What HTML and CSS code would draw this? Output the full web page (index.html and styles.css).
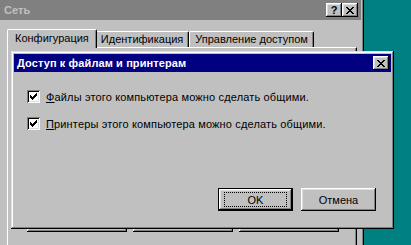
FILE: index.html
```html
<!DOCTYPE html>
<html lang="ru">
<head>
    <meta charset="UTF-8">
    <title>Сеть</title>
    <link rel="stylesheet" href="styles.css">
</head>
<body>
    <div id="desktop">
        <div class="window net-window">
            <div class="title-bar inactive">
                <span class="title-text">Сеть</span>
                <div class="title-buttons">
                    <div class="title-btn help-btn">?</div>
                    <div class="title-btn">
                        <svg width="8" height="7" viewBox="0 0 8 7"><path d="M0 0h2v1h-2zM6 0h2v1h-2zM1 1h2v1h-2zM5 1h2v1h-2zM2 2h4v1h-4zM3 3h2v1h-2zM2 4h4v1h-4zM1 5h2v1h-2zM5 5h2v1h-2zM0 6h2v1h-2zM6 6h2v1h-2z"/></svg>
                    </div>
                </div>
            </div>
            <div class="net-body">
                <div class="tabs">
                    <div class="tab selected">Конфигурация</div>
                    <div class="tab">Идентификация</div>
                    <div class="tab">Управление доступом</div>
                </div>
                <div class="tab-panel">
                    <div class="panel-buttons">
                        <div class="button wide">Добавить...</div>
                        <div class="button wide">Удалить</div>
                        <div class="button wide">Свойства</div>
                    </div>
                </div>
            </div>
        </div>

        <div class="window share-dialog">
            <div class="title-bar">
                <span class="title-text">Доступ к файлам и принтерам</span>
                <div class="title-buttons">
                    <div class="title-btn">
                        <svg width="8" height="7" viewBox="0 0 8 7"><path d="M0 0h2v1h-2zM6 0h2v1h-2zM1 1h2v1h-2zM5 1h2v1h-2zM2 2h4v1h-4zM3 3h2v1h-2zM2 4h4v1h-4zM1 5h2v1h-2zM5 5h2v1h-2zM0 6h2v1h-2zM6 6h2v1h-2z"/></svg>
                    </div>
                </div>
            </div>
            <div class="dialog-body">
                <div class="options">
                    <label class="option">
                        <span class="checkbox">
                            <svg width="7" height="7" viewBox="0 0 7 7"><path d="M6 0h1v1h-1zM5 1h2v1h-2zM0 2h1v1h-1zM4 2h3v1h-3zM0 3h2v1h-2zM3 3h3v1h-3zM0 4h5v1h-5zM1 5h3v1h-3zM2 6h1v1h-1z"/></svg>
                        </span>
                        <span class="option-text"><u>Ф</u>айлы этого компьютера можно сделать общими.</span>
                    </label>
                    <label class="option">
                        <span class="checkbox">
                            <svg width="7" height="7" viewBox="0 0 7 7"><path d="M6 0h1v1h-1zM5 1h2v1h-2zM0 2h1v1h-1zM4 2h3v1h-3zM0 3h2v1h-2zM3 3h3v1h-3zM0 4h5v1h-5zM1 5h3v1h-3zM2 6h1v1h-1z"/></svg>
                        </span>
                        <span class="option-text"><u>П</u>ринтеры этого компьютера можно сделать общими.</span>
                    </label>
                </div>
                <div class="dialog-buttons">
                    <div class="button default"><span class="focus">OK</span></div>
                    <div class="button">Отмена</div>
                </div>
            </div>
        </div>
    </div>
</body>
</html>
```

FILE: styles.css
```css
body {
    margin: 0;
    font-family: "Liberation Sans", Arial, sans-serif;
    font-size: 11px;
    color: #000;
}
#desktop {
    position: relative;
    width: 411px;
    height: 245px;
    background-color: #008080;
    overflow: hidden;
}
.window {
    position: absolute;
    display: flex;
    flex-direction: column;
    box-sizing: border-box;
    padding: 3px;
    background-color: #c0c0c0;
    box-shadow: inset -1px -1px #000, inset 1px 1px #dfdfdf, inset -2px -2px #808080, inset 2px 2px #fff;
}
.net-window {
    left: -4px;
    top: -2px;
    width: 368px;
    height: 270px;
}
.share-dialog {
    left: 11px;
    top: 51px;
    width: 383px;
    height: 178px;
}
.title-bar {
    display: flex;
    align-items: center;
    height: 18px;
    padding-left: 3px;
    background-color: #000080;
    color: #fff;
    font-weight: bold;
}
.title-bar.inactive {
    height: 20px;
    margin-top: -1px;
    padding-left: 5px;
    background-color: #808080;
    color: #c0c0c0;
}
.title-text {
    flex: 1;
    letter-spacing: 0.1px;
}
.title-buttons {
    display: flex;
    margin-right: 2px;
}
.title-bar.inactive .title-buttons {
    margin-right: 3px;
}
.title-btn {
    display: flex;
    align-items: center;
    justify-content: center;
    box-sizing: border-box;
    width: 16px;
    height: 14px;
    background-color: #c0c0c0;
    color: #000;
    box-shadow: inset -1px -1px #000, inset 1px 1px #fff, inset -2px -2px #808080, inset 2px 2px #dfdfdf;
    font-size: 11px;
    line-height: 14px;
}
.title-btn svg {
    margin-top: 1px;
}
.net-body {
    flex: 1;
    display: flex;
    flex-direction: column;
    padding: 9px 4px 0 8px;
}
.tabs {
    display: flex;
    align-items: flex-end;
    height: 18px;
    padding-left: 2px;
}
.tab {
    position: relative;
    box-sizing: border-box;
    height: 16px;
    padding: 1px 5px 0 5px;
    border-top: 1px solid #fff;
    border-left: 1px solid #fff;
    border-right: 1px solid #000;
    border-radius: 2px 2px 0 0;
    box-shadow: inset -1px 0 #808080;
    line-height: 13px;
}
.tab.selected {
    z-index: 1;
    height: 19px;
    margin: 0 -2px -1px -2px;
    padding: 2px 7px 0 7px;
    background-color: #c0c0c0;
}
.tab-panel {
    flex: 1;
    padding: 2px;
    border-top: 1px solid #fff;
    border-left: 1px solid #fff;
    border-right: 1px solid #000;
    box-shadow: inset -1px 0 #808080;
}
.panel-buttons {
    display: flex;
    gap: 6px;
    margin-top: 159px;
    padding-left: 17px;
}
.button {
    display: flex;
    align-items: center;
    justify-content: center;
    box-sizing: border-box;
    width: 75px;
    height: 23px;
    background-color: #c0c0c0;
    box-shadow: inset -1px -1px #000, inset 1px 1px #fff, inset -2px -2px #808080, inset 2px 2px #dfdfdf;
}
.button.wide {
    width: 100px;
}
.button.default {
    border: 1px solid #000;
}
.focus {
    display: flex;
    align-items: center;
    justify-content: center;
    box-sizing: border-box;
    width: 63px;
    height: 15px;
    border: 1px dotted #000;
}
.dialog-body {
    flex: 1;
    display: flex;
    flex-direction: column;
}
.options {
    display: flex;
    flex-direction: column;
    gap: 14px;
    padding: 18px 0 0 13px;
}
.option {
    display: flex;
    align-items: center;
    height: 13px;
}
.checkbox {
    display: flex;
    align-items: center;
    justify-content: center;
    box-sizing: border-box;
    width: 13px;
    height: 13px;
    background-color: #fff;
    box-shadow: inset 1px 1px #808080, inset -1px -1px #fff, inset 2px 2px #000, inset -2px -2px #dfdfdf;
}
.option-text {
    margin-left: 6px;
    letter-spacing: 0.15px;
}
.dialog-buttons {
    display: flex;
    justify-content: flex-end;
    gap: 8px;
    margin-top: auto;
    padding: 0 15px 15px 0;
}
```
